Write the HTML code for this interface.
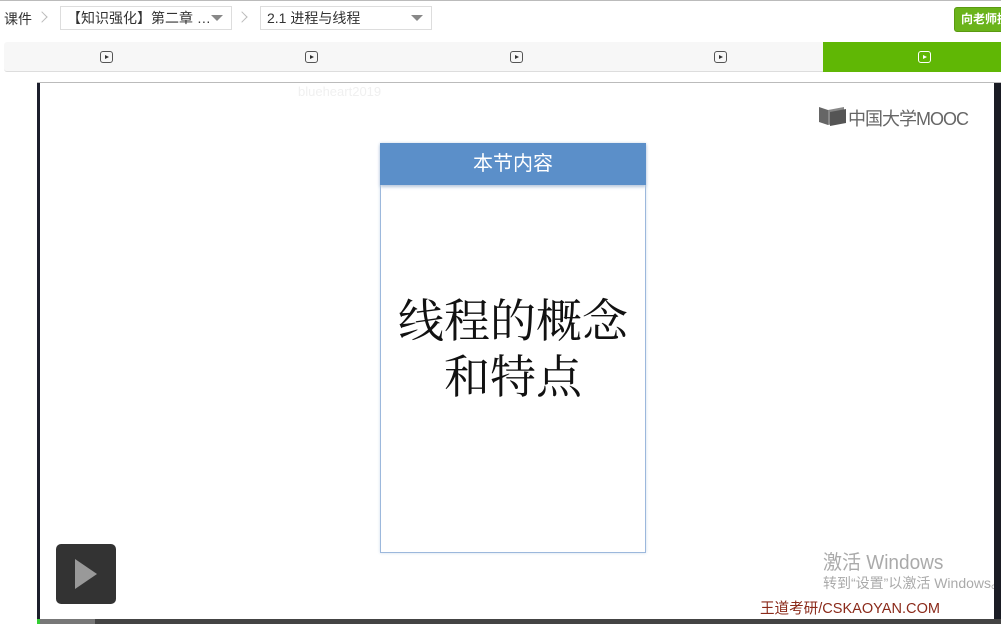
<!DOCTYPE html>
<html><head><meta charset="utf-8"><style>
*{margin:0;padding:0;box-sizing:border-box}
body{width:1001px;height:624px;overflow:hidden;background:#fff;font-family:"Liberation Sans","Noto Sans CJK SC",sans-serif;position:relative}
.a{position:absolute}
.sel{position:absolute;top:6px;height:24px;border:1px solid #ddd;background:#fff;font-size:14px;color:#333;line-height:22px;padding-left:6px}
.tri{position:absolute;right:8px;top:8px;width:0;height:0;border-left:6px solid transparent;border-right:6px solid transparent;border-top:6px solid #888}
.chev{position:absolute;top:13px;width:8px;height:8px;border-top:1.5px solid #bbb;border-right:1.5px solid #bbb;transform:rotate(45deg)}
.pi{position:absolute;top:51px;width:13px;height:12px;border:1.3px solid #555;border-radius:3px}
.pi:after{content:"";position:absolute;left:3.5px;top:2.5px;border-top:2.5px solid transparent;border-bottom:2.5px solid transparent;border-left:4px solid #333}
.pw:after{border-left-color:#fff}
</style></head><body>
<div class="a" style="left:0;top:0;width:1001px;height:1px;background:#bbb"></div>
<div class="a" style="left:4px;top:9px;font-size:14px;color:#333">课件</div>
<div class="chev" style="left:38px"></div>
<div class="sel" style="left:60px;width:172px">【知识强化】第二章 …<span class="tri"></span></div>
<div class="chev" style="left:238px"></div>
<div class="sel" style="left:260px;width:172px">2.1 进程与线程<span class="tri"></span></div>
<div class="a" style="left:954px;top:7px;width:60px;height:25px;background:#6ab31a;border:1px solid #5a9a10;border-radius:3px;color:#fff;font-size:12px;font-weight:bold;line-height:23px;padding-left:6px">向老师提问</div>
<div class="a" style="left:4px;top:42px;width:997px;height:30px;background:#f7f7f7;border-bottom:1px solid #ddd;border-radius:3px 0 0 3px"></div>
<div class="pi" style="left:100px"></div>
<div class="pi" style="left:305px"></div>
<div class="pi" style="left:510px"></div>
<div class="pi" style="left:714px"></div>
<div class="a" style="left:823px;top:42px;width:178px;height:30px;background:#60b705"></div>
<div class="pi pw" style="left:918px;border-color:#fff"></div>
<div class="a" style="left:37px;top:82px;width:964px;height:1px;background:#bbb"></div>
<div class="a" style="left:37px;top:83px;width:3px;height:541px;background:#1c1f2c"></div>
<div class="a" style="left:994px;top:83px;width:7px;height:541px;background:#1a1c24"></div>
<div class="a" style="left:298px;top:84px;font-size:13px;color:#f0f0f0">blueheart2019</div>
<svg class="a" style="left:818px;top:105px" width="30" height="22" viewBox="0 0 30 22"><path d="M1 2 L10 5 L10 20 L1 17Z" fill="#666"/><path d="M10 5 L26 2 L26 17 L10 20Z" fill="#888"/><path d="M12 7 L28 4 L28 18 L12 21Z" fill="#555"/></svg>
<div class="a" style="left:848px;top:105px;font-size:18px;color:#666;letter-spacing:-1px">中国大学MOOC</div>
<div class="a" style="left:380px;top:143px;width:266px;height:410px;border:1px solid #9cb8dc;box-shadow:0 0 3px #cfdcec;background:#fff"></div>
<div class="a" style="left:380px;top:143px;width:266px;height:42px;background:#5b8fc9;color:#fff;font-size:20px;text-align:center;line-height:42px;box-shadow:0 2px 3px #b8c8dc">本节内容</div>
<div class="a" style="left:370px;top:290px;width:286px;text-align:center;font-size:46px;line-height:56px;color:#111;font-family:'Noto Serif CJK SC','Liberation Serif',serif">线程的概念<br>和特点</div>
<div class="a" style="left:56px;top:544px;width:60px;height:60px;background:#333;border-radius:5px"></div>
<div class="a" style="left:75px;top:559px;border-top:15px solid transparent;border-bottom:15px solid transparent;border-left:22px solid #999"></div>
<div class="a" style="left:823px;top:546px;font-size:20px;color:#aaa;transform:scaleX(0.95);transform-origin:left">激活 Windows</div>
<div class="a" style="left:823px;top:573px;width:171px;overflow:hidden;font-size:14px;color:#aaa;white-space:nowrap">转到“设置”以激活 Windows。</div>
<div class="a" style="left:760px;top:597px;font-size:15px;color:#8b2a1a;transform:scaleX(0.97);transform-origin:left">王道考研/CSKAOYAN.COM</div>
<div class="a" style="left:37px;top:619px;width:964px;height:5px;background:#444"></div>
<div class="a" style="left:40px;top:619px;width:55px;height:5px;background:#777"></div>
<div class="a" style="left:37px;top:619px;width:3px;height:5px;background:#3c3"></div>
</body></html>
